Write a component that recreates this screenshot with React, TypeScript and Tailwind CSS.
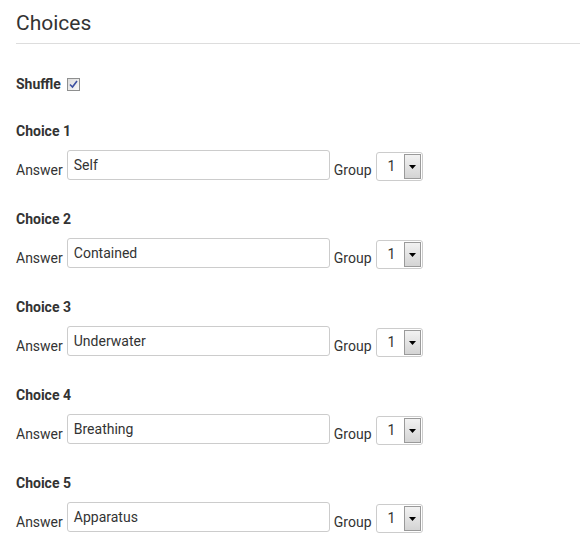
import React from "react";

const choices = ["Self", "Contained", "Underwater", "Breathing", "Apparatus"];

function Checkbox() {
  return (
    <span className="inline-flex items-center justify-center w-[13px] h-[13px] border border-[#8e8f8f] bg-gradient-to-br from-[#dcdcdc] to-[#f8f8f8]">
      <svg width="9" height="9" viewBox="0 0 9 9">
        <path d="M1 4.5 L3.5 7 L8 1" fill="none" stroke="#3b4fa0" strokeWidth="1.6" />
      </svg>
    </span>
  );
}

function Select() {
  return (
    <div className="flex items-stretch w-[47px] h-[29px] border border-[#ccc] rounded-[3px] bg-white ml-[4px] -mb-px">
      <div className="flex-1 flex items-center pl-[11px] text-[14px] text-[#333]">1</div>
      <div className="w-[17px] my-[1px] mr-[1px] border border-[#9a9a9a] bg-gradient-to-b from-[#f2f2f2] to-[#d4d4d4] flex items-center justify-center">
        <svg width="7" height="4" viewBox="0 0 7 4">
          <path d="M0 0 H7 L3.5 4 Z" fill="#000" />
        </svg>
      </div>
    </div>
  );
}

export default function App() {
  return (
    <div className="w-[581px] h-[552px] bg-white pl-4 pr-px text-[#333]" style={{ fontFamily: "Roboto, 'Open Sans', sans-serif" }}>
      <div className="pt-[11px] pb-[8px] border-b border-[#ddd] text-[21px] leading-[24px] text-[#333]">Choices</div>
      <div className="mt-[32px] flex items-center gap-[6px] h-[16px]">
        <span className="text-[14px] font-bold">Shuffle</span>
        <Checkbox />
      </div>
      {choices.map((c, i) => (
        <div key={i} className="mt-[31px]">
          <div className="text-[14px] font-bold leading-[16px]">Choice {i + 1}</div>
          <div className="mt-[11px] flex items-end">
            <span className="text-[14px] leading-[16px] mb-[2px] mr-[4px]">Answer</span>
            <div className="w-[263px] h-[30px] border border-[#ccc] rounded-[3px] px-[6px] pt-[6px] text-[14px] leading-[16px] text-[#333]">{c}</div>
            <span className="text-[14px] leading-[16px] mb-[2px] ml-[4px]">Group</span>
            <Select />
          </div>
        </div>
      ))}
    </div>
  );
}
